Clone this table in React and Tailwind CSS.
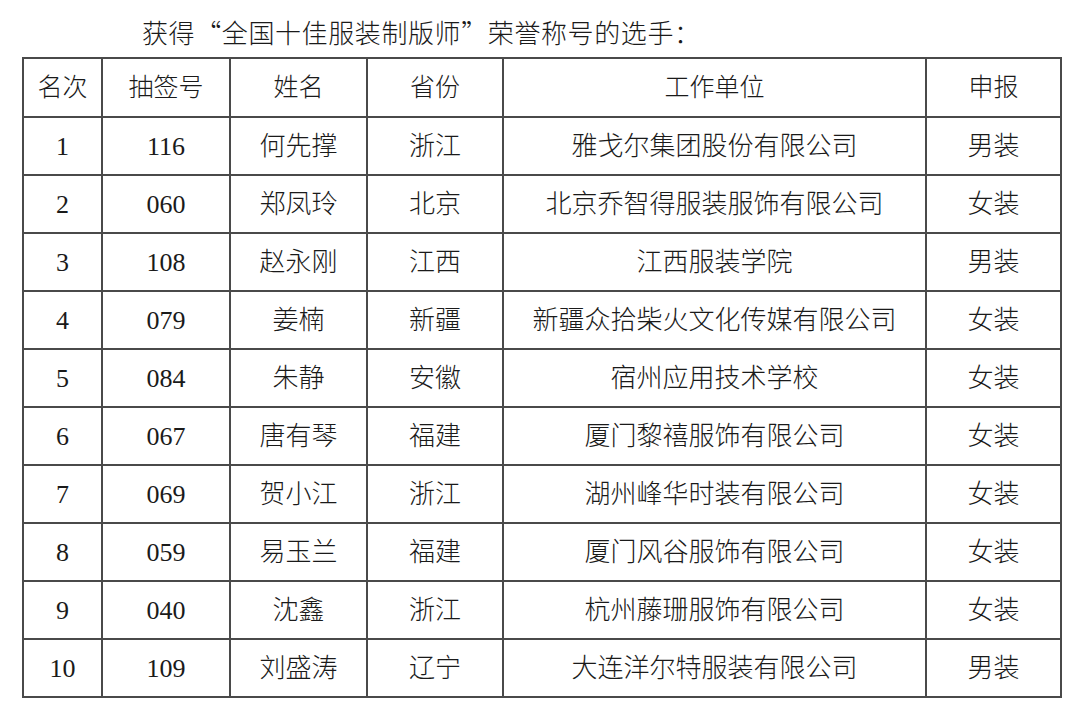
import React from "react";

const rows = [
	["1", "116", "何先撑", "浙江", "雅戈尔集团股份有限公司", "男装"],
	["2", "060", "郑凤玲", "北京", "北京乔智得服装服饰有限公司", "女装"],
	["3", "108", "赵永刚", "江西", "江西服装学院", "男装"],
	["4", "079", "姜楠", "新疆", "新疆众拾柴火文化传媒有限公司", "女装"],
	["5", "084", "朱静", "安徽", "宿州应用技术学校", "女装"],
	["6", "067", "唐有琴", "福建", "厦门黎禧服饰有限公司", "女装"],
	["7", "069", "贺小江", "浙江", "湖州峰华时装有限公司", "女装"],
	["8", "059", "易玉兰", "福建", "厦门风谷服饰有限公司", "女装"],
	["9", "040", "沈鑫", "浙江", "杭州藤珊服饰有限公司", "女装"],
	["10", "109", "刘盛涛", "辽宁", "大连洋尔特服装有限公司", "男装"],
];

const headers = ["名次", "抽签号", "姓名", "省份", "工作单位", "申报"];
const widths = ["w-[79px]", "w-[128px]", "w-[137px]", "w-[136px]", "w-[423px]", "w-[135px]"];

export default function App() {
	return (
		<div className="w-[1080px] h-[726px] bg-white text-[#1a1a1a] font-['Liberation_Serif','Noto_Sans_CJK_SC',serif] overflow-hidden">
			<div className="pl-[142px] pt-[15px] h-[57px] text-[26px] leading-[34px] tracking-[0.6px] font-light font-['Noto_Sans_CJK_SC',sans-serif]">
				获得“全国十佳服装制版师”荣誉称号的选手：
			</div>
			<table className="ml-[22px] border-collapse table-fixed w-[1039px]">
				<thead>
					<tr className="h-[59px]">
						{headers.map((h, i) => (
							<th key={h} className={`${widths[i]} border-2 border-[#4a4a4a] font-light text-[25px] text-center align-middle`}>
								{h}
							</th>
						))}
					</tr>
				</thead>
				<tbody>
					{rows.map((r) => (
						<tr key={r[0]} className="h-[58px]">
							{r.map((c, i) => (
								<td key={i} className="border-2 border-[#4a4a4a] text-[26px] font-light text-center align-middle">
									{c}
								</td>
							))}
						</tr>
					))}
				</tbody>
			</table>
		</div>
	);
}
